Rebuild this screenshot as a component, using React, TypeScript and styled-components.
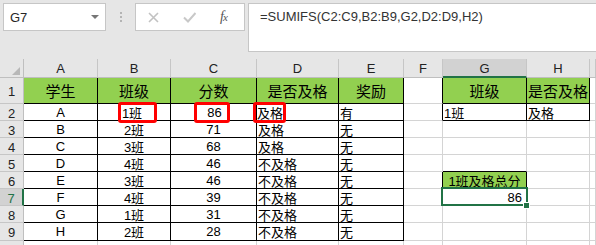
import React from 'react';
import styled, { createGlobalStyle, css } from 'styled-components';

const GREEN_FILL = '#92d050';
const EXCEL_GREEN = '#217346';

const GlobalStyle = createGlobalStyle`
  html, body {
    margin: 0;
    padding: 0;
    background: #e6e6e6;
  }
  body {
    font-family: "Liberation Sans", "Noto Sans CJK SC", sans-serif;
    overflow: hidden;
  }
`;

const COL_LETTERS = ['A', 'B', 'C', 'D', 'E', 'F', 'G', 'H', ''];
const ROW_HEIGHTS = [26, 17, 17, 17, 17, 17, 17, 17, 18, 17];

const HEADERS = ['学生', '班级', '分数', '是否及格', '奖励'];
const STUDENTS = [
  ['A', '1班', '86', '及格', '有'],
  ['B', '2班', '71', '及格', '无'],
  ['C', '3班', '68', '及格', '无'],
  ['D', '4班', '46', '不及格', '无'],
  ['E', '3班', '46', '不及格', '无'],
  ['F', '4班', '39', '不及格', '无'],
  ['G', '1班', '31', '不及格', '无'],
  ['H', '2班', '28', '不及格', '无'],
];

// red annotation boxes around the criteria cells
const MARKS: Record<string, { pl: number; pr: number; ml: number }> = {
  '2-1': { pl: 1, pr: 12, ml: 7 },
  '2-2': { pl: 10, pr: 5, ml: -3 },
  '2-3': { pl: 1, pr: 0, ml: -5 },
};

type Align = 'left' | 'center' | 'right';

const Page = styled.div`
  width: 596px;
  height: 245px;
  overflow: hidden;
`;

/* ---------- formula bar ---------- */

const FormulaBar = styled.div`
  box-sizing: border-box;
  height: 59px;
  padding: 3px 0 0 3px;
  display: flex;
  align-items: flex-start;
`;

const NameBox = styled.div`
  box-sizing: border-box;
  width: 103px;
  height: 28px;
  padding: 0 6px;
  background: #fff;
  border: 1px solid #c6c6c6;
  display: flex;
  align-items: center;
  justify-content: space-between;
  font-size: 13px;
  color: #262626;
`;

const DropArrow = styled.span`
  width: 0;
  height: 0;
  border-left: 4px solid transparent;
  border-right: 4px solid transparent;
  border-top: 4px solid #767676;
`;

const Grip = styled.div`
  width: 29px;
  height: 28px;
  display: flex;
  flex-direction: column;
  align-items: center;
  justify-content: center;
  gap: 2px;

  span {
    width: 2px;
    height: 2px;
    background: #b4b4b4;
  }
`;

const FxBox = styled.div`
  box-sizing: border-box;
  width: 110px;
  height: 28px;
  padding: 0 0 0 12px;
  background: #fff;
  border: 1px solid #c6c6c6;
  display: flex;
  align-items: center;
  gap: 24px;
`;

const FxLabel = styled.span`
  font-family: "Liberation Serif", serif;
  font-style: italic;
  font-size: 14px;
  color: #555;
  letter-spacing: -1px;

  small {
    font-size: 11px;
  }
`;

const FormulaInput = styled.div`
  box-sizing: border-box;
  flex: 1;
  height: 49px;
  margin-left: 3px;
  padding: 3px 11px;
  background: #fff;
  border: 1px solid #c6c6c6;
  border-right: none;
  font-size: 13px;
  line-height: 20px;
  color: #333;
`;

/* ---------- sheet ---------- */

const Sheet = styled.div`
  display: grid;
  grid-template-columns: 24px 74px 73px 86px 82px 65px 39px 84px 63px 1fr;
  grid-template-rows: 19px ${ROW_HEIGHTS.map((h) => `${h}px`).join(' ')};
`;

const HeadBase = css`
  box-sizing: border-box;
  display: flex;
  align-items: center;
  justify-content: center;
  font-size: 13px;
  color: #222;
`;

const Corner = styled.div`
  ${HeadBase};
  align-items: flex-end;
  justify-content: flex-end;
  padding: 0 3px 2px 0;
  background: #e6e6e6;
  border-right: 1px solid #bfbfbf;
  border-bottom: 1px solid #bfbfbf;

  span {
    width: 0;
    height: 0;
    border-left: 8px solid transparent;
    border-bottom: 8px solid #b8b8b8;
  }
`;

const ColHead = styled.div<{ $active?: boolean }>`
  ${HeadBase};
  background: ${(p) => (p.$active ? '#d2d2d2' : '#e6e6e6')};
  border-right: 1px solid #c6c6c6;
  border-bottom: ${(p) => (p.$active ? `2px solid ${EXCEL_GREEN}` : '1px solid #bfbfbf')};
  padding-top: 1px;
`;

const RowHead = styled.div<{ $active?: boolean }>`
  ${HeadBase};
  background: ${(p) => (p.$active ? '#d2d2d2' : '#e6e6e6')};
  color: ${(p) => (p.$active ? EXCEL_GREEN : '#222')};
  border-right: ${(p) => (p.$active ? `2px solid ${EXCEL_GREEN}` : '1px solid #bfbfbf')};
  border-bottom: 1px solid #c6c6c6;
  padding-top: 2px;
`;

const selected = css`
  position: relative;
  z-index: 2;

  &::after {
    content: '';
    position: absolute;
    left: -2px;
    top: -2px;
    right: -2px;
    bottom: -1px;
    border: 2px solid ${EXCEL_GREEN};
    pointer-events: none;
  }

  &::before {
    content: '';
    position: absolute;
    right: -4px;
    bottom: -4px;
    width: 5px;
    height: 5px;
    background: ${EXCEL_GREEN};
    border: 1px solid #fff;
    z-index: 1;
  }
`;

const Cell = styled.div<{
  $right: string;
  $bottom: string;
  $fill?: string;
  $align: Align;
  $size: number;
  $selected?: boolean;
}>`
  box-sizing: border-box;
  min-width: 0;
  padding: 0 ${(p) => (p.$align === 'right' ? 4 : 1)}px 0 ${(p) => (p.$align === 'left' ? 1 : 1)}px;
  display: flex;
  align-items: center;
  justify-content: ${(p) =>
    p.$align === 'right' ? 'flex-end' : p.$align === 'left' ? 'flex-start' : 'center'};
  background: ${(p) => p.$fill ?? '#fff'};
  border-right: 1px solid ${(p) => p.$right};
  border-bottom: 1px solid ${(p) => p.$bottom};
  font-size: ${(p) => p.$size}px;
  color: #000;
  white-space: nowrap;

  ${(p) => p.$selected && selected};
`;

const Marked = styled.span<{ $pl: number; $pr: number; $ml: number }>`
  position: relative;
  z-index: 1;
  box-sizing: border-box;
  flex-shrink: 0;
  height: 21px;
  display: inline-flex;
  align-items: center;
  padding: 0 ${(p) => p.$pr}px 0 ${(p) => p.$pl}px;
  margin-left: ${(p) => p.$ml}px;
  border: 3px solid #ff0000;
  border-radius: 3px;
`;

const GRID = '#d4d4d4';
const BLACK = '#000';

const inStudentTable = (r: number, c: number) => r >= 1 && r <= 9 && c <= 4;
const inLookupTable = (r: number, c: number) => (r === 1 || r === 2) && (c === 6 || c === 7);

const rightEdge = (r: number, c: number) => {
  if (inStudentTable(r, c) || inLookupTable(r, c)) return BLACK;
  if (c === 5 && (r === 1 || r === 2 || r === 6)) return BLACK;
  if (c === 6 && r === 6) return BLACK;
  return GRID;
};

const bottomEdge = (r: number, c: number) => {
  if (inStudentTable(r, c) || inLookupTable(r, c)) return BLACK;
  if (c === 6 && (r === 5 || r === 6)) return BLACK;
  return GRID;
};

const cellText = (r: number, c: number) => {
  if (r === 1) {
    if (c <= 4) return HEADERS[c];
    if (c === 6) return '班级';
    if (c === 7) return '是否及格';
    return '';
  }
  if (r >= 2 && r <= 9 && c <= 4) return STUDENTS[r - 2][c];
  if (r === 2 && c === 6) return '1班';
  if (r === 2 && c === 7) return '及格';
  if (r === 6 && c === 6) return '1班及格总分';
  if (r === 7 && c === 6) return '86';
  return '';
};

const cellAlign = (r: number, c: number): Align => {
  if (r === 1) return 'center';
  if (r === 7 && c === 6) return 'right';
  if (r === 6 && c === 6) return 'center';
  if (c <= 2) return 'center';
  return 'left';
};

const cellFill = (r: number, c: number) => {
  if (r === 1 && (c <= 4 || c === 6 || c === 7)) return GREEN_FILL;
  if (r === 6 && c === 6) return GREEN_FILL;
  return undefined;
};

const CrossIcon = () => (
  <svg width="11" height="11" viewBox="0 0 11 11">
    <path d="M1 1 L10 10 M10 1 L1 10" stroke="#c2c2c2" strokeWidth="1.6" fill="none" />
  </svg>
);

const CheckIcon = () => (
  <svg width="13" height="11" viewBox="0 0 13 11">
    <path d="M1 5.5 L5 9.5 L12.5 1" stroke="#c8c8c8" strokeWidth="2" fill="none" />
  </svg>
);

const App = () => {
  const rows = ROW_HEIGHTS.map((_, i) => i + 1);

  return (
    <Page>
      <GlobalStyle />
      <FormulaBar>
        <NameBox>
          G7
          <DropArrow />
        </NameBox>
        <Grip>
          <span />
          <span />
          <span />
        </Grip>
        <FxBox>
          <CrossIcon />
          <CheckIcon />
          <FxLabel>
            f<small>x</small>
          </FxLabel>
        </FxBox>
        <FormulaInput>=SUMIFS(C2:C9,B2:B9,G2,D2:D9,H2)</FormulaInput>
      </FormulaBar>

      <Sheet>
        <Corner>
          <span />
        </Corner>
        {COL_LETTERS.map((letter, c) => (
          <ColHead key={`h${c}`} $active={letter === 'G'}>
            {letter}
          </ColHead>
        ))}

        {rows.map((r) => (
          <React.Fragment key={r}>
            <RowHead $active={r === 7}>{r}</RowHead>
            {COL_LETTERS.map((_, c) => {
              const text = cellText(r, c);
              const mark = MARKS[`${r}-${c}`];
              return (
                <Cell
                  key={c}
                  $right={rightEdge(r, c)}
                  $bottom={bottomEdge(r, c)}
                  $fill={cellFill(r, c)}
                  $align={cellAlign(r, c)}
                  $size={r === 1 ? 15 : 13}
                  $selected={r === 7 && c === 6}
                >
                  {mark ? (
                    <Marked $pl={mark.pl} $pr={mark.pr} $ml={mark.ml}>
                      {text}
                    </Marked>
                  ) : (
                    text
                  )}
                </Cell>
              );
            })}
          </React.Fragment>
        ))}
      </Sheet>
    </Page>
  );
};

export default App;
